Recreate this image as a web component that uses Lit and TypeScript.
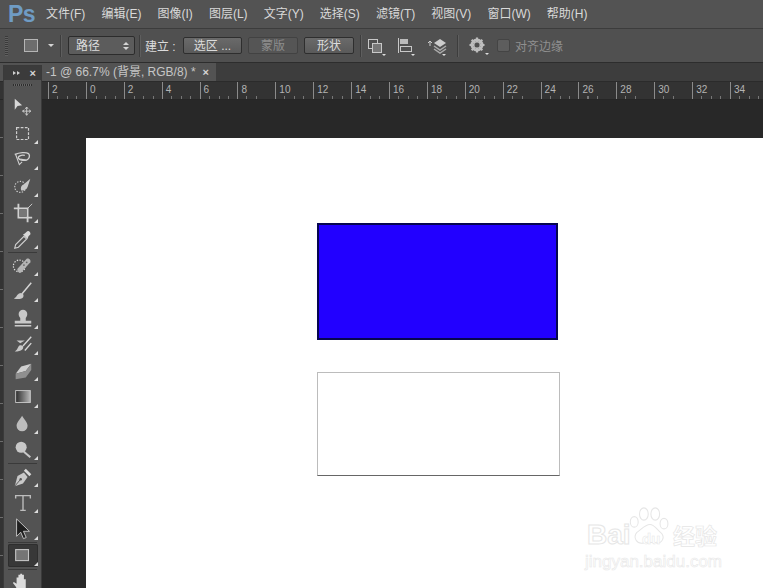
import { LitElement, html, css, svg } from "lit";
import { customElement } from "lit/decorators.js";

const MENUS = ["文件(F)", "编辑(E)", "图像(I)", "图层(L)", "文字(Y)", "选择(S)", "滤镜(T)", "视图(V)", "窗口(W)", "帮助(H)"];
const RULER = ["2", "0", "2", "4", "6", "8", "10", "12", "14", "16", "18", "20", "22", "24", "26", "28", "30", "32", "34"];

const S = "#cfcfcf";
type Tool = { icon: unknown; tri?: boolean; div?: boolean; sel?: boolean };
const TOOLS: Tool[] = [
  { icon: svg`<path d="M3 3v12l3-4 5-1z" fill="#d8d8d8"/><path d="M16 12v9M11.500 16.500h9M14.500 14l1.500-2 1.500 2M14.500 19l1.500 2 1.500-2M13.500 15l-2 1.500 2 1.500M18.500 15l2 1.500-2 1.500" stroke="${S}" stroke-width="1" fill="none"/>` },
  { tri: true, icon: svg`<rect x="5" y="5" width="13" height="13" fill="none" stroke="${S}" stroke-width="1.300" stroke-dasharray="3 1.500"/>` },
  { tri: true, icon: svg`<path d="M3 6c5-2 12-3 15-1 2 2 1 6-2 7-4 1-8 0-9-2-1-2 3-4 7-3" fill="none" stroke="${S}" stroke-width="1.500"/><path d="M4 6l4 11 3-3M9 11l6 1" fill="none" stroke="${S}" stroke-width="1.200"/>` },
  { tri: true, icon: svg`<circle cx="9" cy="13" r="6" fill="none" stroke="${S}" stroke-width="1.200" stroke-dasharray="1.500 1.500"/><path d="M20 4l-7 6c-3 1-4 4-3 7 3 0 6-1 7-4z" fill="#c8c8c8"/>` },
  { tri: true, icon: svg`<path d="M7 2v15h15M2 7h15v15" fill="none" stroke="#d0d0d0" stroke-width="2"/><path d="M17 7l5-5" stroke="${S}" stroke-width="1"/><rect x="8" y="8" width="8" height="8" fill="#777"/>` },
  { tri: true, div: true, icon: svg`<path d="M3 22l1-4 9-9 3 3-9 9z" fill="none" stroke="${S}" stroke-width="1.200"/><path d="M12 7l5 5 1-3 2-2c1-2-2-5-4-3l-2 2z" fill="#d8d8d8"/>` },
  { tri: true, icon: svg`<circle cx="8" cy="12" r="6.500" fill="none" stroke="#e0e0e0" stroke-width="1.300" stroke-dasharray="1.500 1.500"/><path d="M6 15L16 4c2-1 5 1 4 4L10 19c-2 1-5-1-4-4z" fill="#b5b5b5"/><circle cx="13" cy="11" r="1" fill="#666"/><circle cx="16" cy="8" r="1" fill="#666"/>` },
  { tri: true, icon: svg`<path d="M21 2L11 14" stroke="#d5d5d5" stroke-width="1.600"/><path d="M10 13c3 1 3 3 2 5-2 2-7 2-10 1 3-1 3-3 4-4s2-2 4-2z" fill="#c8c8c8"/>` },
  { tri: true, icon: svg`<path d="M9 12c-3-3-2-9 3-9s6 6 3 9v3h6v3H3v-3h6z" fill="#c8c8c8"/><path d="M3 20.500h18" stroke="#d8d8d8" stroke-width="1.500"/>` },
  { tri: true, icon: svg`<path d="M21 3L12 13M21 10l-7 8" stroke="#d5d5d5" stroke-width="1.500"/><path d="M5 7h9l-5 3z" fill="#c8c8c8"/><path d="M12 13c1 3-1 6-9 6 2-1 3-3 4-5s3-2 5-1z" fill="#c8c8c8"/>` },
  { tri: true, icon: svg`<path d="M4 15l6-8 11-3-6 8z" fill="#cfcfcf"/><path d="M4 15l11-3 6-8v7l-6 8-11 2z" fill="#8f8f8f"/>` },
  { tri: true, icon: svg`<defs><linearGradient id="g"><stop offset="0" stop-color="#2c2c2c"/><stop offset="1" stop-color="#b8b8b8"/></linearGradient></defs><rect x="4" y="5" width="16" height="13" fill="url(#g)" stroke="#c8c8c8"/>` },
  { tri: true, icon: svg`<path d="M11 3c2 4 6 7 6 11a6 6 0 0 1-12 0c0-4 4-7 6-11z" fill="#bdbdbd"/>` },
  { tri: true, div: true, icon: svg`<circle cx="10" cy="9" r="6" fill="#c8c8c8"/><path d="M13 14l7 6" stroke="#c8c8c8" stroke-width="2.200"/>` },
  { tri: true, icon: svg`<path d="M3 22l3-11 7-4 4 5-5 7z" fill="#c8c8c8"/><path d="M3 22l6-7" stroke="#555" stroke-width="1"/><circle cx="9.500" cy="14.500" r="1.300" fill="#555"/><path d="M14 4l6 6" stroke="#d8d8d8" stroke-width="3"/>` },
  { tri: true, icon: svg`<path d="M4 7V4h16v3M12 4v16M9 20h6" fill="none" stroke="#bdbdbd" stroke-width="1.500"/>` },
  { tri: true, div: true, icon: svg`<path d="M5 1v19l4.500-4.500 3 7 3-1.200-3-6.800h6.500z" fill="#1f1f1f" stroke="#c8c8c8" stroke-width="1"/>` },
  { tri: true, div: true, sel: true, icon: svg`<rect x="4" y="5" width="14" height="12" fill="#757575" stroke="#c4c4c4" stroke-width="1.200"/>` },
  { icon: svg`<path d="M5 13V7h2v5V4h2v8-9h2v9V4h2v8l0-3h2v9c0 3-2 4-5 4s-4-1-6-5l-3-4 1-1 3 2z" fill="#dcdcdc"/>` },
];

@customElement("app-root")
export class AppRoot extends LitElement {
  static styles = css`
    :host {
      display: block;
      width: 763px;
      height: 588px;
      overflow: hidden;
      position: relative;
      font-family: "Liberation Sans", "Noto Sans CJK SC", sans-serif;
      font-size: 12px;
      background: #282828;
    }
    .menubar {
      height: 28px;
      background: #535353;
      display: flex;
      align-items: center;
      padding-left: 8px;
      border-bottom: 1px solid #3c3c3c;
      color: #d9d9d9;
    }
    .logo {
      font: bold 23px "Liberation Sans", sans-serif;
      color: #6f9cc4;
      width: 38px;
      letter-spacing: -0.500px;
    }
    .menus { display: flex; gap: 16.100px; }
    .menu { white-space: nowrap; line-height: 28px; }
    .options {
      height: 33px;
      background: #505050;
      border-bottom: 1px solid #2d2d2d;
      display: flex;
      align-items: center;
      color: #dcdcdc;
      padding-left: 5px;
    }
    .grip {
      width: 3px;
      height: 20px;
      background: repeating-linear-gradient(#3a3a3a 0 1px, #5f5f5f 1px 2px);
      margin-right: 16px;
    }
    .swatch {
      width: 12px;
      height: 11px;
      background: #6d6d6d;
      border: 1px solid #b5b5b5;
      margin-right: 10px;
    }
    .arrow {
      width: 0;
      height: 0;
      border-left: 3px solid transparent;
      border-right: 3px solid transparent;
      border-top: 3px solid #d5d5d5;
    }
    .vsep {
      width: 1px;
      height: 22px;
      background: #3d3d3d;
      border-right: 1px solid #5e5e5e;
    }
    .vsep.first { margin-left: 6px; }
    .vsep.third { margin-left: 8px; }
    .select {
      width: 67px;
      height: 19px;
      box-sizing: border-box;
      margin: 0 4px 0 6px;
      background: #5c5c5c;
      border: 1px solid #2c2c2c;
      border-radius: 2px;
      display: flex;
      align-items: center;
      justify-content: space-between;
      padding: 0 5px 0 7px;
      line-height: 1;
    }
    .updown { display: flex; flex-direction: column; gap: 2px; }
    .updown i {
      display: block;
      width: 0;
      border-left: 3px solid transparent;
      border-right: 3px solid transparent;
    }
    .updown i:first-child { border-bottom: 3px solid #d5d5d5; }
    .updown i:last-child { border-top: 3px solid #d5d5d5; }
    .label { margin: 0 8px 0 4px; width: 30px; white-space: nowrap; }
    .btn {
      height: 17px;
      box-sizing: border-box;
      background: linear-gradient(#6a6a6a, #5a5a5a);
      border: 1px solid #2e2e2e;
      border-radius: 2px;
      display: flex;
      align-items: center;
      justify-content: center;
      line-height: 1;
      margin-right: 6px;
    }
    .btn.w59 { width: 59px; }
    .btn.w50 { width: 50px; }
    .btn.off {
      color: #8d8d8d;
      background: #555;
      border-color: #424242;
    }
    .oicon { display: block; flex: none; }
    .m5 { margin-left: 5px; }
    .m9 { margin-left: 9px; }
    .m10 { margin-left: 10px; }
    .check {
      width: 13px;
      height: 13px;
      box-sizing: border-box;
      background: #5d5d5d;
      border: 1px solid #444;
      border-radius: 2px;
      margin: 0 5px 0 7px;
    }
    .dim { color: #8f8f8f; white-space: nowrap; }
    .tabbar {
      height: 18px;
      background: #3d3d3d;
      border-bottom: 1px solid #2b2b2b;
      display: flex;
    }
    .tab {
      width: 216px;
      background: #535353;
      display: flex;
      align-items: center;
      justify-content: flex-end;
      gap: 7px;
      padding-right: 7px;
      box-sizing: border-box;
      color: #c6c6c6;
      white-space: nowrap;
      line-height: 1;
    }
    .x { font: bold 11px "Liberation Sans", sans-serif; color: #d5d5d5; }
    .hruler {
      height: 17px;
      background: #333;
      border-bottom: 1px solid #262626;
      display: flex;
      padding-left: 48px;
      overflow: hidden;
    }
    .cell {
      flex: none;
      width: 37.900px;
      box-sizing: border-box;
      border-left: 1px solid #8b8b8b;
      padding: 1px 0 0 3px;
      font: 10px/13px "Liberation Sans", sans-serif;
      color: #b4b4b4;
      background: repeating-linear-gradient(90deg, transparent 0 8.500px, #777 8.500px 9.500px) left bottom / 100% 3px no-repeat;
    }
    .body { display: flex; height: 488px; }
    .vruler {
      width: 42px;
      flex: none;
      background: repeating-linear-gradient(#333 0 37px, #6d6d6d 37px 38px);
      border-right: 1px solid #222;
      box-sizing: border-box;
    }
    .work { flex: 1; padding: 38px 0 0 44px; overflow: hidden; }
    .canvas {
      background: #fff;
      height: 500px;
      padding: 85px 0 0 231px;
      position: relative;
      box-sizing: border-box;
      display: flex;
      flex-direction: column;
    }
    .blue {
      width: 241px;
      height: 117px;
      box-sizing: border-box;
      background: #2200ff;
      border: 2px solid #060650;
    }
    .outline {
      width: 243px;
      height: 104px;
      box-sizing: border-box;
      margin-top: 32px;
      border: 1px solid #bcbcbc;
      border-bottom-color: #666;
    }
    .mark { position: absolute; left: 499px; top: 368px; width: 140px; height: 70px; color: #fff; }
    .bai {
      position: absolute;
      left: 2px;
      top: 15px;
      font: bold 28px/28px "Liberation Sans", sans-serif;
      -webkit-text-stroke: 1px #e6e6e6;
    }
    .du {
      position: absolute;
      left: 57px;
      top: 25px;
      font: bold 15px/16px "Liberation Sans", sans-serif;
      -webkit-text-stroke: 0.500px #e6e6e6;
    }
    .paw { position: absolute; left: 43px; top: 1px; }
    .jy {
      position: absolute;
      left: 88px;
      top: 13px;
      font-size: 22px;
      line-height: 30px;
      font-family: "Noto Sans CJK SC", sans-serif;
      font-weight: 700;
      -webkit-text-stroke: 0.700px #e6e6e6;
      white-space: nowrap;
    }
    .url {
      position: absolute;
      left: 0;
      top: 46px;
      font: 17px/20px "Liberation Sans", sans-serif;
      -webkit-text-stroke: 0.600px #e8e8e8;
      white-space: nowrap;
    }
    .panel {
      position: absolute;
      left: 4px;
      top: 66px;
      width: 37px;
      height: 530px;
      background: #535353;
      box-shadow: 0 0 0 1px #3a3a3a;
    }
    .phead {
      height: 14px;
      background: #3b3b3b;
      display: flex;
      align-items: center;
      justify-content: space-between;
      padding: 0 5px 0 9px;
      color: #d0d0d0;
    }
    .ff { display: flex; }
    .ff i {
      display: block;
      border-top: 2.500px solid transparent;
      border-bottom: 2.500px solid transparent;
      border-left: 3px solid #d0d0d0;
      margin-right: 1px;
    }
    .pgrip {
      height: 2px;
      margin: 4px 9px 8px;
      background: repeating-linear-gradient(90deg, #2d2d2d 0 1px, #666 1px 2px);
    }
    .tool {
      height: 26.400px;
      position: relative;
      display: flex;
      align-items: center;
      justify-content: center;
    }
    .tool.tri::after {
      content: "";
      position: absolute;
      right: 3px;
      bottom: 3px;
      border-left: 4px solid transparent;
      border-bottom: 4px solid #dcdcdc;
    }
    .tool.div::before {
      content: "";
      position: absolute;
      left: 4px;
      right: 4px;
      bottom: -0.500px;
      height: 1px;
      background: #3a3a3a;
    }
    .tool.sel .inner {
      background: #383838;
      box-shadow: inset 0 0 0 1px #2e2e2e;
      border-radius: 2px;
    }
    .inner { width: 30px; height: 23px; display: flex; align-items: center; justify-content: center; }
    .tool svg { display: block; }
  `;

  render() {
    return html`
      <div class="menubar">
        <div class="logo">Ps</div>
        <div class="menus">${MENUS.map((m) => html`<div class="menu">${m}</div>`)}</div>
      </div>
      <div class="options">
        <div class="grip"></div>
        <div class="swatch"></div>
        <div class="arrow"></div>
        <div class="vsep first"></div>
        <div class="select"><span>路径</span><span class="updown"><i></i><i></i></span></div>
        <div class="vsep"></div>
        <div class="label">建立 :</div>
        <div class="btn w59">选区 ...</div>
        <div class="btn w50 off">蒙版</div>
        <div class="btn w50">形状</div>
        <div class="vsep"></div>
        <svg class="oicon m5" width="20" height="20" viewBox="0 0 20 20" fill="none">
          <rect x="1.500" y="3.500" width="9" height="9" stroke="#c8c8c8"/><rect x="5.500" y="7.500" width="9" height="9" stroke="#c8c8c8" fill="#777"/>
          <path d="M15 18h4l-2 2z" fill="#ddd"/>
        </svg>
        <svg class="oicon m10" width="20" height="20" viewBox="0 0 20 20" fill="none">
          <path d="M1.500 2v15" stroke="#c8c8c8"/><rect x="3" y="3" width="8" height="5" fill="#bbb"/><rect x="3.500" y="10.500" width="11" height="5" stroke="#c8c8c8"/>
          <path d="M14 18h4l-2 2z" fill="#ddd"/>
        </svg>
        <svg class="oicon m10" width="22" height="20" viewBox="0 0 22 20" fill="none">
          <path d="M3 5v5M1 7l2-2 2 2" stroke="#ccc"/><path d="M7 7l6-4 6 4-6 4z" fill="#ccc"/><path d="M7 10l6 4 6-4M7 13l6 4 6-4" stroke="#aaa" stroke-width="1.500"/>
          <path d="M15 18h4l-2 2z" fill="#ddd"/>
        </svg>
        <div class="vsep third"></div>
        <svg class="oicon m9" width="22" height="22" viewBox="0 0 22 22">
          <circle cx="9" cy="10" r="5" fill="none" stroke="#bdbdbd" stroke-width="3"/>
          <path d="M9 2.500v15M1.500 10h15M3.700 4.700l10.600 10.600M14.300 4.700L3.700 15.300" stroke="#bdbdbd" stroke-width="2.200"/>
          <circle cx="9" cy="10" r="2.500" fill="#505050"/>
          <path d="M17 18h4l-2 2z" fill="#ddd"/>
        </svg>
        <div class="check"></div>
        <div class="dim">对齐边缘</div>
      </div>
      <div class="tabbar">
        <div class="tab"><span>-1 @ 66.7% (背景, RGB/8) *</span><span class="x">×</span></div>
      </div>
      <div class="hruler">${RULER.map((r) => html`<div class="cell">${r}</div>`)}</div>
      <div class="body">
        <div class="vruler"></div>
        <div class="work">
          <div class="canvas">
            <div class="blue"></div>
            <div class="outline"></div>
            <div class="mark">
              <div class="bai">Bai</div>
              <svg class="paw" width="44" height="42" viewBox="0 0 50 48" fill="#fff" stroke="#e6e6e6" stroke-width="1.200">
                <ellipse cx="7" cy="17" rx="4.500" ry="6"/><ellipse cx="18" cy="8" rx="5" ry="7"/><ellipse cx="31" cy="8" rx="5" ry="7"/><ellipse cx="41" cy="19" rx="4.500" ry="6"/>
                <path d="M25 20c5 0 8 6 12 9 6 5 2 13-5 12-4 0-9-2-14 0-8 2-13-6-8-12 5-3 9-9 15-9z"/>
              </svg>
              <div class="du">du</div>
              <div class="jy">经验</div>
              <div class="url">jingyan.baidu.com</div>
            </div>
          </div>
        </div>
      </div>
      <div class="panel">
        <div class="phead"><span class="ff"><i></i><i></i></span><span class="x">×</span></div>
        <div class="pgrip"></div>
        ${TOOLS.map(
          (t) => html`<div class="tool ${t.tri ? "tri" : ""} ${t.div ? "div" : ""} ${t.sel ? "sel" : ""}">
            <div class="inner"><svg width="22" height="22" viewBox="0 0 24 24">${t.icon}</svg></div>
          </div>`
        )}
      </div>
    `;
  }
}
